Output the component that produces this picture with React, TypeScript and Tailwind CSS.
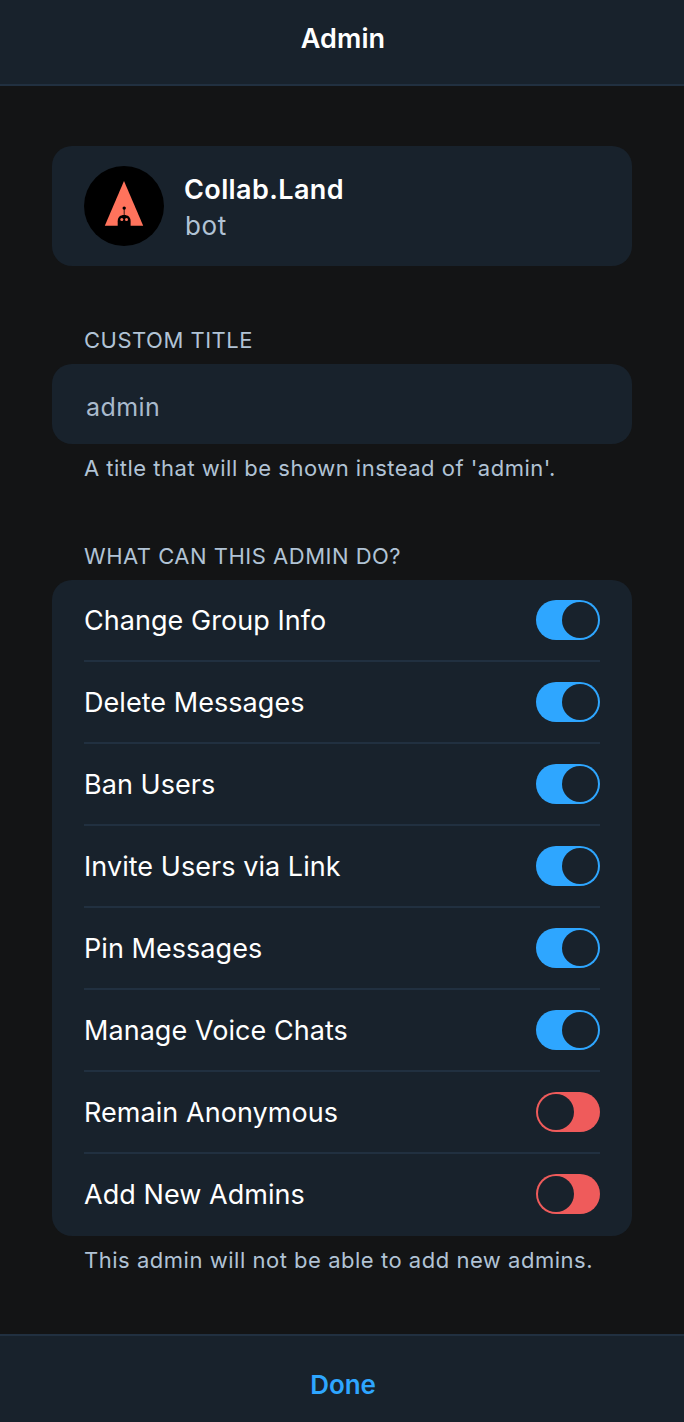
import { useState } from "react";

type Permission = { label: string; enabled: boolean };

const initialPermissions: Permission[] = [
  { label: "Change Group Info", enabled: true },
  { label: "Delete Messages", enabled: true },
  { label: "Ban Users", enabled: true },
  { label: "Invite Users via Link", enabled: true },
  { label: "Pin Messages", enabled: true },
  { label: "Manage Voice Chats", enabled: true },
  { label: "Remain Anonymous", enabled: false },
  { label: "Add New Admins", enabled: false },
];

function Avatar() {
  return (
    <svg viewBox="0 0 80 80" className="size-20 shrink-0" aria-hidden="true">
      <circle cx="40" cy="40" r="40" fill="#000" />
      <path d="M40 15 L59.2 59.8 H20.8 Z" fill="#ff735c" />
      <path d="M33.7 60.5 V55.2 C33.7 51 36.2 49 40.1 49 S46.6 51 46.6 55.2 V60.5 Z" fill="#000" />
      <path d="M40.2 42 V50" stroke="#000" strokeWidth="0.8" />
      <circle cx="40.2" cy="42.1" r="1.7" fill="#000" />
      <circle cx="37.8" cy="53.6" r="1.5" fill="#ff735c" />
      <circle cx="42.5" cy="53.6" r="1.5" fill="#ff735c" />
    </svg>
  );
}

function Toggle({ label, on, onToggle }: { label: string; on: boolean; onToggle: () => void }) {
  return (
    <button
      type="button"
      role="switch"
      aria-checked={on}
      aria-label={label}
      onClick={onToggle}
      className={`flex h-10 w-16 shrink-0 items-center rounded-full p-0.5 ${
        on ? "justify-end bg-[#2ea6ff]" : "justify-start bg-[#ef5b5b]"
      }`}
    >
      <span className="size-9 rounded-full bg-[#18222c]" />
    </button>
  );
}

export default function App() {
  const [permissions, setPermissions] = useState(initialPermissions);

  const toggle = (index: number) =>
    setPermissions((items) =>
      items.map((item, i) => (i === index ? { ...item, enabled: !item.enabled } : item)),
    );

  return (
    <div className="flex h-[1422px] w-[684px] flex-col bg-[#131415] font-['Inter',sans-serif] text-white">
      <header className="flex h-[86px] shrink-0 justify-center border-b-2 border-[#213040] bg-[#18222c] pt-[19px] pl-0.5">
        <h1 className="text-[27px] leading-10 font-semibold tracking-[0.1px]">Admin</h1>
      </header>

      <main className="flex flex-1 flex-col px-[52px] pt-[60px]">
        <section className="flex h-[120px] items-center gap-5 rounded-[20px] bg-[#18222c] px-8">
          <Avatar />
          <div className="pt-[3px]">
            <p className="text-[27px] leading-9 font-semibold tracking-[0.4px]">Collab.Land</p>
            <p className="pl-px text-[26px] leading-9 tracking-[0.6px] text-[#b1c3d5]">bot</p>
          </div>
        </section>

        <h2 className="mt-[58px] px-8 text-[22px] leading-8 tracking-[0.5px] text-[#b1c3d5]">CUSTOM TITLE</h2>
        <div className="mt-2 flex h-20 items-center rounded-[20px] bg-[#18222c] px-[34px] pt-1.5">
          <span className="text-[25px] leading-8 tracking-[0.4px] text-[#a9bacd]">admin</span>
        </div>
        <p className="mt-2 px-8 text-[22px] leading-8 tracking-[0.49px] text-[#b1c3d5]">
          A title that will be shown instead of 'admin'.
        </p>

        <h2 className="mt-14 px-8 text-[22px] leading-8 tracking-[0.5px] text-[#b1c3d5]">
          WHAT CAN THIS ADMIN DO?
        </h2>
        <ul className="mt-2 h-[656px] rounded-[20px] bg-[#18222c] px-8">
          {permissions.map((permission, index) => (
            <li
              key={permission.label}
              className="flex h-[82px] items-center justify-between border-b-2 border-[#213040] last:border-transparent"
            >
              <span className="pt-0.5 text-[27px] leading-10 tracking-[0.05px]">{permission.label}</span>
              <Toggle label={permission.label} on={permission.enabled} onToggle={() => toggle(index)} />
            </li>
          ))}
        </ul>
        <p className="mt-2 px-8 text-[22px] leading-8 tracking-[0.52px] text-[#b1c3d5]">
          This admin will not be able to add new admins.
        </p>
      </main>

      <footer className="flex h-[88px] shrink-0 justify-center border-t-2 border-[#213040] bg-[#18222c] pt-[29px] pl-0.5">
        <button type="button" className="h-10 text-[26px] leading-10 font-semibold tracking-[-0.1px] text-[#2ea6ff]">
          Done
        </button>
      </footer>
    </div>
  );
}
